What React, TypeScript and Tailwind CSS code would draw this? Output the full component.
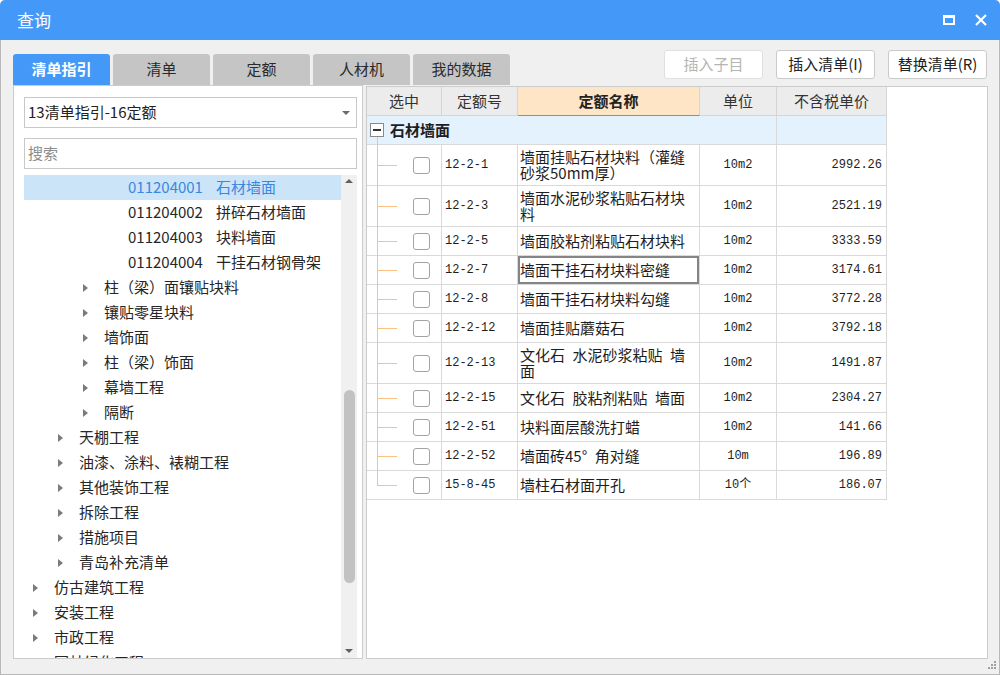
import React from 'react';

type TreeNode = { level: number; label: string; code?: string; selected?: boolean };
type Row = { code: string; name: string[]; unit: string; price: string; active?: boolean };

const CJK = "font-['Noto_Sans_CJK_SC','Noto_Sans',sans-serif]";
const MONO = "font-['Liberation_Mono','Noto_Sans_CJK_SC',monospace]";

const tree: TreeNode[] = [
  { level: 3, code: '011204001', label: '石材墙面', selected: true },
  { level: 3, code: '011204002', label: '拼碎石材墙面' },
  { level: 3, code: '011204003', label: '块料墙面' },
  { level: 3, code: '011204004', label: '干挂石材钢骨架' },
  { level: 2, label: '柱（梁）面镶贴块料' },
  { level: 2, label: '镶贴零星块料' },
  { level: 2, label: '墙饰面' },
  { level: 2, label: '柱（梁）饰面' },
  { level: 2, label: '幕墙工程' },
  { level: 2, label: '隔断' },
  { level: 1, label: '天棚工程' },
  { level: 1, label: '油漆、涂料、裱糊工程' },
  { level: 1, label: '其他装饰工程' },
  { level: 1, label: '拆除工程' },
  { level: 1, label: '措施项目' },
  { level: 1, label: '青岛补充清单' },
  { level: 0, label: '仿古建筑工程' },
  { level: 0, label: '安装工程' },
  { level: 0, label: '市政工程' },
  { level: 0, label: '园林绿化工程' },
];

const indent = ['pl-[9px]', 'pl-[34px]', 'pl-[59px]', 'pl-[104px]'];

// \u2002 = half-width gap like the original's SimSun space
const rows: Row[] = [
  { code: '12-2-1', name: ['墙面挂贴石材块料（灌缝', '砂浆50mm厚）'], unit: '10m2', price: '2992.26' },
  { code: '12-2-3', name: ['墙面水泥砂浆粘贴石材块', '料'], unit: '10m2', price: '2521.19' },
  { code: '12-2-5', name: ['墙面胶粘剂粘贴石材块料'], unit: '10m2', price: '3333.59' },
  { code: '12-2-7', name: ['墙面干挂石材块料密缝'], unit: '10m2', price: '3174.61', active: true },
  { code: '12-2-8', name: ['墙面干挂石材块料勾缝'], unit: '10m2', price: '3772.28' },
  { code: '12-2-12', name: ['墙面挂贴蘑菇石'], unit: '10m2', price: '3792.18' },
  { code: '12-2-13', name: ['文化石\u2002水泥砂浆粘贴\u2002墙', '面'], unit: '10m2', price: '1491.87' },
  { code: '12-2-15', name: ['文化石\u2002胶粘剂粘贴\u2002墙面'], unit: '10m2', price: '2304.27' },
  { code: '12-2-51', name: ['块料面层酸洗打蜡'], unit: '10m2', price: '141.66' },
  { code: '12-2-52', name: ['墙面砖45°\u2002角对缝'], unit: '10m', price: '196.89' },
  { code: '15-8-45', name: ['墙柱石材面开孔'], unit: '10个', price: '186.07' },
];

const tabs = ['清单指引', '清单', '定额', '人材机', '我的数据'];

function TitleBar() {
  return (
    <div className="h-[40px] shrink-0 bg-[#4499f8] rounded-t-[5px] flex items-center pl-[17px] pr-[13px]">
      <span className="text-[17px] text-white">查询</span>
      <div className="ml-auto flex items-center gap-[20px]">
        <svg width="12" height="10" viewBox="0 0 12 10">
          <rect x="1" y="1" width="10" height="8" fill="none" stroke="white" strokeWidth="2" />
          <rect x="0" y="0" width="12" height="3" fill="white" />
        </svg>
        <svg width="12" height="12" viewBox="0 0 12 12">
          <path d="M1 1L11 11M11 1L1 11" stroke="white" strokeWidth="2.2" />
        </svg>
      </div>
    </div>
  );
}

function LeftPanel() {
  return (
    <div className="w-[350px] h-[574px] bg-white border border-[#cccccc] pl-[10px] pr-[5px] pt-[11px] flex flex-col">
      <div className="h-[31px] border border-[#c8c8c8] flex items-center pl-[3px] pr-[6px] text-[15px] text-[#222]">
        <span>13清单指引-16定额</span>
        <span className="ml-auto w-0 h-0 border-x-[4px] border-x-transparent border-t-[4px] border-t-[#6b6b6b]" />
      </div>
      <div className="h-[31px] mt-[10px] border border-[#c8c8c8] flex items-center pl-[3px] text-[15px] text-[#8c8c8c]">
        搜索
      </div>
      <div className="mt-[6px] flex-1 flex min-h-0">
        <div className="flex-1 overflow-hidden">
          {tree.map((n, i) => (
            <div
              key={i}
              className={`h-[25px] flex items-center whitespace-nowrap text-[15px] ${indent[n.level]} ${
                n.selected ? 'bg-[#cce4f7] text-[#3a87e0]' : 'text-[#262626]'
              }`}
            >
              {n.level < 3 && (
                <span className="w-0 h-0 mr-[16px] border-y-[4px] border-y-transparent border-l-[5px] border-l-[#7b7b7b]" />
              )}
              {n.code && <span className="mr-[13px]">{n.code}</span>}
              <span>{n.label}</span>
            </div>
          ))}
        </div>
        <div className="w-[16px] bg-[#f0f0f0] flex flex-col items-center">
          <span className="mt-[4px] w-0 h-0 border-x-[4px] border-x-transparent border-b-[4px] border-b-[#606060]" />
          <div className="mt-[207px] w-[11px] h-[193px] rounded-full bg-[#c2c2c2]" />
          <span className="mt-auto mb-[5px] w-0 h-0 border-x-[4px] border-x-transparent border-t-[4px] border-t-[#606060]" />
        </div>
      </div>
    </div>
  );
}

function TreeLines({ last }: { last?: boolean }) {
  return (
    <>
      <span className={`absolute left-[10px] top-0 w-px bg-[#f8c27f] ${last ? 'h-1/2' : '-bottom-px'}`} />
      <span className="absolute left-[10px] top-1/2 w-[20px] h-px bg-[#f8c27f]" />
    </>
  );
}

function RightPanel() {
  const cell = 'border-r border-b border-[#d9d9d9] flex items-center';
  const head = 'border-r border-b border-[#d5d5d5] bg-[#ececec] flex items-center justify-center text-[15px] text-[#333]';
  return (
    <div className="w-[622px] h-[573px] mt-[1px] bg-white border border-[#cccccc]">
      <div className="flex h-[29px]">
        <div className={`w-[75px] ${head}`}>选中</div>
        <div className={`w-[76px] ${head}`}>定额号</div>
        <div className="w-[182px] border-r border-[#d5d5d5] border-b border-b-[#4a9cf4] bg-[#fde5c5] flex items-center justify-center text-[15px] font-bold text-[#222]">
          定额名称
        </div>
        <div className={`w-[77px] ${head}`}>单位</div>
        <div className={`w-[110px] ${head}`}>不含税单价</div>
      </div>
      <div className="flex h-[29px]">
        <div className={`w-[410px] relative bg-[#e4f2fe] ${cell}`}>
          <span className="ml-[3px] w-[14px] h-[14px] border border-[#8a8a8a] bg-white flex items-center justify-center">
            <span className="w-[8px] h-[1.5px] bg-[#333]" />
          </span>
          <span className="absolute left-[10px] top-[21px] -bottom-px w-px bg-[#f8c27f]" />
          <span className="ml-[6px] text-[15px] font-bold text-[#1e1e1e]">石材墙面</span>
        </div>
        <div className={`w-[110px] bg-[#e4f2fe] ${cell}`} />
      </div>
      {rows.map((r, i) => (
        <div key={r.code} className={`flex ${r.name.length > 1 ? 'h-[41px]' : 'h-[29px]'} text-[#1e1e1e]`}>
          <div className={`w-[75px] relative ${cell}`}>
            <TreeLines last={i === rows.length - 1} />
            <span className="ml-[46px] w-[17px] h-[17px] rounded-[3px] border border-[#a3a3a3] bg-white" />
          </div>
          <div className={`w-[76px] pl-[3px] text-[12px] ${MONO} ${cell}`}>{r.code}</div>
          <div
            className={`w-[182px] px-[2px] flex-col !items-start justify-center text-[15px] leading-[16px] ${cell} ${
              r.active ? 'shadow-[inset_0_0_0_2px_#858585]' : ''
            }`}
          >
            {r.name.map((l) => (
              <span key={l} className="whitespace-pre">
                {l}
              </span>
            ))}
          </div>
          <div className={`w-[77px] justify-center text-[12px] ${MONO} ${cell}`}>{r.unit}</div>
          <div className={`w-[110px] justify-end pr-[4px] text-[12px] ${MONO} ${cell}`}>{r.price}</div>
        </div>
      ))}
    </div>
  );
}

export default function App() {
  return (
    <div className={`relative w-[1000px] h-[675px] flex flex-col overflow-hidden ${CJK}`}>
      <TitleBar />
      <div className="flex-1 flex flex-col bg-[#f0f0f0] border-x border-b border-[#b8b8b8] pl-[12px] pr-[11px]">
        <div className="h-[45px] shrink-0 flex items-end">
          <div className="flex gap-[3px]">
            {tabs.map((t, i) => (
              <div
                key={t}
                className={`w-[97px] h-[31px] rounded-t-[3px] flex items-center justify-center text-[15px] ${
                  i === 0 ? 'bg-[#4499f8] text-white font-bold' : 'bg-[#c5c5c5] text-[#2a2a2a]'
                }`}
              >
                {t}
              </div>
            ))}
          </div>
          <div className="ml-auto mb-[6px] mr-[1px] flex gap-[13px]">
            <div className="w-[99px] h-[29px] rounded-[3px] border border-[#e0e0e0] bg-white flex items-center justify-center text-[15px] text-[#b5b5b5]">
              插入子目
            </div>
            <div className="w-[99px] h-[29px] rounded-[3px] border border-[#cacaca] bg-white flex items-center justify-center text-[15px] text-[#222]">
              插入清单(I)
            </div>
            <div className="w-[99px] h-[29px] rounded-[3px] border border-[#cacaca] bg-white flex items-center justify-center text-[15px] text-[#222]">
              替换清单(R)
            </div>
          </div>
        </div>
        <div className="flex gap-[3px] items-start">
          <LeftPanel />
          <RightPanel />
        </div>
      </div>
      <svg className="absolute left-[988px] top-[661px]" width="9" height="9" viewBox="0 0 9 9">
        <rect x="6" y="0" width="2" height="2" fill="#a0a0a0" />
        <rect x="3" y="3" width="2" height="2" fill="#a0a0a0" />
        <rect x="6" y="3" width="2" height="2" fill="#a0a0a0" />
        <rect x="0" y="6" width="2" height="2" fill="#a0a0a0" />
        <rect x="3" y="6" width="2" height="2" fill="#a0a0a0" />
        <rect x="6" y="6" width="2" height="2" fill="#a0a0a0" />
      </svg>
    </div>
  );
}
